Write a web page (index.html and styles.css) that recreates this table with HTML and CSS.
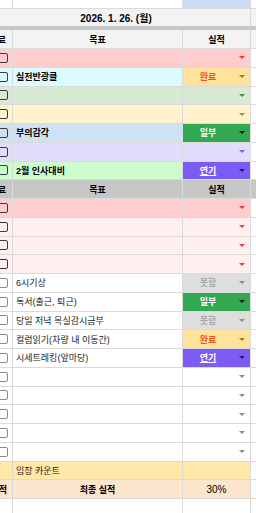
FILE: index.html
```html
<!DOCTYPE html>
<html lang="ko">
<head>
<meta charset="utf-8">
<link rel="stylesheet" href="styles.css">
</head>
<body>
<div class="sheet">
  <div class="row top"><div class="c c1"></div><div class="c c2"></div><div class="c c3 blue"></div><div class="c c4"></div></div>
  <div class="row date"><div class="c dcell">2026. 1. 26. (월)</div><div class="c c4"></div></div>
  <div class="row hdr light"><div class="c c1"><span class="cut">료</span></div><div class="c c2 ctr">목표</div><div class="c c3 ctr">실적</div><div class="c c4"></div></div>

  <div class="row pink"><div class="c c1"><i class="cb"></i></div><div class="c c2"></div><div class="c c3 dd"><span class="lbl"></span><i class="arr red"></i></div><div class="c c4"></div></div>
  <div class="row cyan"><div class="c c1"><i class="cb"></i></div><div class="c c2 b">실전반광클</div><div class="c c3 dd done"><span class="lbl">완료</span><i class="arr"></i></div><div class="c c4"></div></div>
  <div class="row green"><div class="c c1"><i class="cb"></i></div><div class="c c2"></div><div class="c c3 dd"><span class="lbl"></span><i class="arr grn"></i></div><div class="c c4"></div></div>
  <div class="row yellow"><div class="c c1"><i class="cb"></i></div><div class="c c2"></div><div class="c c3 dd"><span class="lbl"></span><i class="arr gold"></i></div><div class="c c4"></div></div>
  <div class="row blue2"><div class="c c1"><i class="cb"></i></div><div class="c c2 b">부의감각</div><div class="c c3 dd part"><span class="lbl">일부</span><i class="arr"></i></div><div class="c c4"></div></div>
  <div class="row lav"><div class="c c1"><i class="cb"></i></div><div class="c c2"></div><div class="c c3 dd"><span class="lbl"></span><i class="arr pur"></i></div><div class="c c4"></div></div>
  <div class="row lgreen"><div class="c c1"><i class="cb"></i></div><div class="c c2 b">2월 인사대비</div><div class="c c3 dd later"><span class="lbl">연기</span><i class="arr"></i></div><div class="c c4"></div></div>

  <div class="row hdr dark"><div class="c c1"><span class="cut">료</span></div><div class="c c2 ctr">목표</div><div class="c c3 ctr">실적</div><div class="c c4"></div></div>

  <div class="row pink"><div class="c c1"><i class="cb"></i></div><div class="c c2"></div><div class="c c3 dd"><span class="lbl"></span><i class="arr red"></i></div><div class="c c4"></div></div>
  <div class="row lpink"><div class="c c1"><i class="cb"></i></div><div class="c c2"></div><div class="c c3 dd"><span class="lbl"></span><i class="arr red"></i></div><div class="c c4"></div></div>
  <div class="row lpink"><div class="c c1"><i class="cb"></i></div><div class="c c2"></div><div class="c c3 dd"><span class="lbl"></span><i class="arr red"></i></div><div class="c c4"></div></div>
  <div class="row lpink"><div class="c c1"><i class="cb"></i></div><div class="c c2"></div><div class="c c3 dd"><span class="lbl"></span><i class="arr red"></i></div><div class="c c4"></div></div>

  <div class="row"><div class="c c1"><i class="cb lt"></i></div><div class="c c2 n">6시기상</div><div class="c c3 dd not"><span class="lbl">못함</span><i class="arr"></i></div><div class="c c4"></div></div>
  <div class="row"><div class="c c1"><i class="cb lt"></i></div><div class="c c2 n">독서(출근, 퇴근)</div><div class="c c3 dd part"><span class="lbl">일부</span><i class="arr"></i></div><div class="c c4"></div></div>
  <div class="row"><div class="c c1"><i class="cb lt"></i></div><div class="c c2 n">당일 저녁 목실감시금부</div><div class="c c3 dd not"><span class="lbl">못함</span><i class="arr"></i></div><div class="c c4"></div></div>
  <div class="row"><div class="c c1"><i class="cb lt"></i></div><div class="c c2 n">컬럼읽기(차량 내 이동간)</div><div class="c c3 dd done"><span class="lbl">완료</span><i class="arr"></i></div><div class="c c4"></div></div>
  <div class="row"><div class="c c1"><i class="cb lt"></i></div><div class="c c2 n">시세트레킹(앞마당)</div><div class="c c3 dd later"><span class="lbl">연기</span><i class="arr"></i></div><div class="c c4"></div></div>
  <div class="row"><div class="c c1"><i class="cb lt"></i></div><div class="c c2"></div><div class="c c3 dd"><span class="lbl"></span><i class="arr gry"></i></div><div class="c c4"></div></div>
  <div class="row"><div class="c c1"><i class="cb lt"></i></div><div class="c c2"></div><div class="c c3 dd"><span class="lbl"></span><i class="arr gry"></i></div><div class="c c4"></div></div>
  <div class="row"><div class="c c1"><i class="cb lt"></i></div><div class="c c2"></div><div class="c c3 dd"><span class="lbl"></span><i class="arr gry"></i></div><div class="c c4"></div></div>
  <div class="row"><div class="c c1"><i class="cb lt"></i></div><div class="c c2"></div><div class="c c3 dd"><span class="lbl"></span><i class="arr gry"></i></div><div class="c c4"></div></div>
  <div class="row"><div class="c c1"><i class="cb lt"></i></div><div class="c c2"></div><div class="c c3 dd"><span class="lbl"></span><i class="arr gry"></i></div><div class="c c4"></div></div>

  <div class="row count"><div class="c c1"></div><div class="c c2 n">임장 카운트</div><div class="c c3"></div><div class="c c4"></div></div>
  <div class="row final"><div class="c c1"><span class="cut b2">적</span></div><div class="c c2 ctr b">최종 실적</div><div class="c c3 ctr num">30%</div><div class="c c4"></div></div>
  <div class="row"><div class="c c1"></div><div class="c c2"></div><div class="c c3"></div><div class="c c4"></div></div>
</div>
</body>
</html>
```

FILE: styles.css
```css
html, body {
  margin: 0;
  padding: 0;
}
body {
  width: 256px;
  height: 513px;
  overflow: hidden;
  background: #fff;
  font-family: "Liberation Sans", "Noto Sans CJK KR", sans-serif;
  font-size: 9px;
  color: #000;
}
.sheet {
  display: flex;
  flex-direction: column;
}
.row {
  display: grid;
  grid-template-columns: 13px 170px 68px 1fr;
  height: 18.75px;
  box-sizing: border-box;
  border-bottom: 1px solid #dadada;
  flex: none;
}
.c {
  box-sizing: border-box;
  border-right: 1px solid #dadada;
  display: flex;
  align-items: center;
  overflow: hidden;
  white-space: nowrap;
  min-width: 0;
}
.c4 { border-right: none; background: #fff; }
.c2 { padding-left: 3px; }
.ctr { justify-content: center; padding-left: 0; }
.b { font-weight: bold; }
.n { color: #222; }
.num { font-size: 10px; }

.top { height: 9px; }
.top .blue { background: #cddcf6; }

.date {
  height: 21px;
  grid-template-columns: 251px 1fr;
  background: #f3f3f3;
  border-bottom: 4px solid #c8c8c8;
}
.date .c4 { background: #f3f3f3; }
.dcell {
  justify-content: center;
  padding-right: 18px;
  font-size: 10px;
  font-weight: bold;
}

.hdr { font-weight: bold; }
.hdr.light { height: 19px; background: #f3f3f3; }
.hdr.light .c4 { background: #f3f3f3; }
.hdr.dark { background: #c6c6c6; }
.hdr.dark .c4 { background: #c6c6c6; }

.c1 { justify-content: flex-end; padding-right: 3px; }
.cut { flex: none; font-weight: bold; margin-right: 3px; }
.cut.b2 { margin-right: 2px; }

.cb {
  display: block;
  flex: none;
  width: 10px;
  height: 10px;
  box-sizing: border-box;
  margin-right: 1px;
  border: 1.5px solid #3a3a3a;
  border-radius: 2px;
}
.cb.lt { border-color: #8a8a8a; }

.pink { background: #ffcdcd; }
.cyan { background: #dcfbff; }
.green { background: #d9ead3; }
.yellow { background: #fff2cc; }
.blue2 { background: #cfe2f3; }
.lav { background: #e4dcfd; }
.lgreen { background: #cdfccd; }
.lpink { background: #ffefef; }
.count { background: #ffe8a8; }
.final { background: #fce5cd; }

.dd {
  font-weight: bold;
}
.lbl {
  flex: 1;
  text-align: center;
  margin-right: 6px;
}
.arr {
  display: block;
  flex: none;
  width: 0;
  height: 0;
  margin-right: 5px;
  border-left: 3px solid transparent;
  border-right: 3px solid transparent;
  border-top: 3px solid #888;
}
.arr.red { border-top-color: #f03a3a; }
.arr.grn { border-top-color: #4e8a3e; }
.arr.gold { border-top-color: #b58a10; }
.arr.pur { border-top-color: #8a5cf0; }
.arr.gry { border-top-color: #8c8c8c; }

.done { background: #ffe39c; color: #f2501d; }
.done .arr { border-top-color: #9c7e1e; }
.part { background: #32a852; color: #fff; }
.part .arr { border-top-color: #151515; }
.later { background: #7c5cf4; color: #fff; }
.later .lbl { text-decoration: underline; }
.later .arr { border-top-color: #1c1c70; }
.not { background: #dedede; color: #a8a8a8; }
.not .arr { border-top-color: #8e8e8e; }
```
